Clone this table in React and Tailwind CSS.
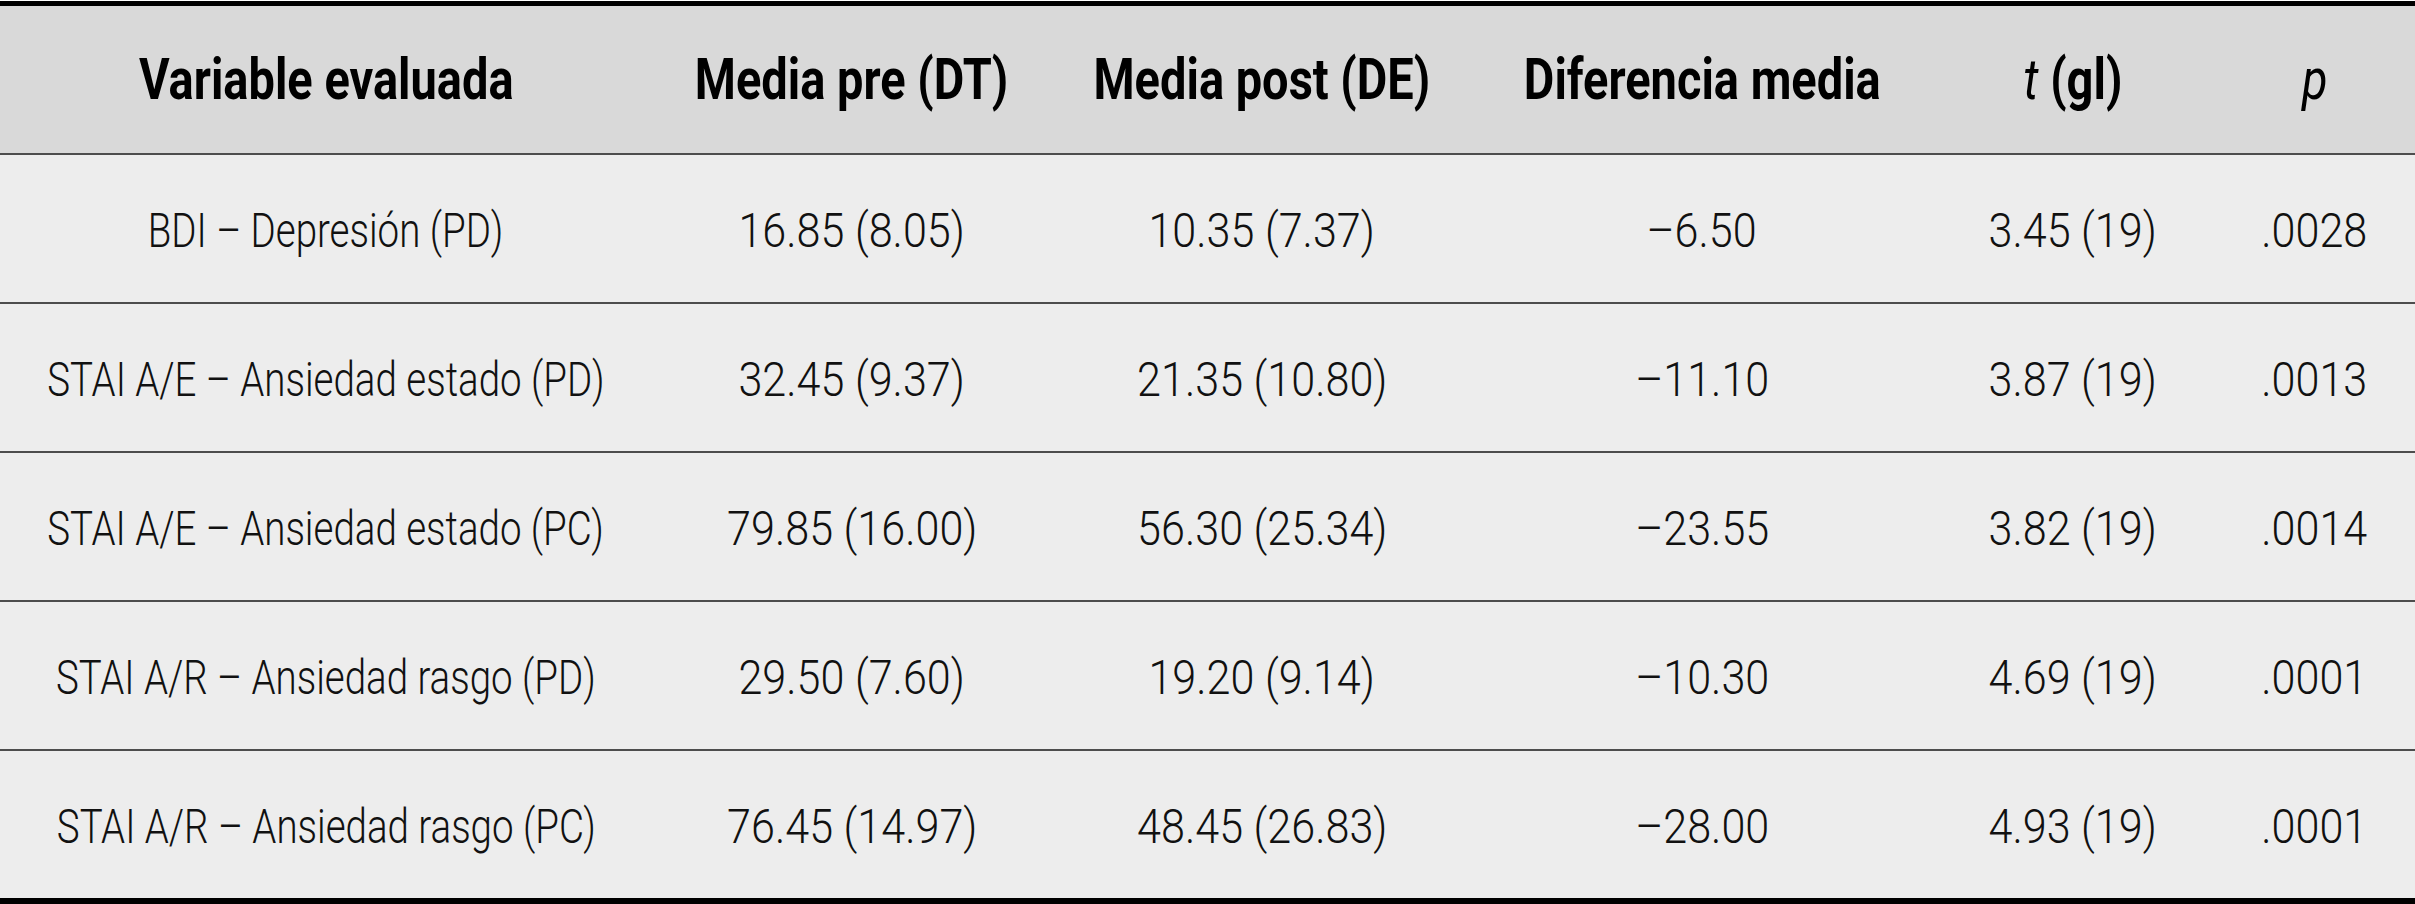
const COLS = "grid grid-cols-[652px_400px_420px_460px_282px_201px]";

const HEADERS = [
  { label: "Variable evaluada" },
  { label: "Media pre (DT)" },
  { label: "Media post (DE)" },
  { label: "Diferencia media" },
  { label: "t", rest: " (gl)" },
  { label: "p", italicOnly: true },
];

const ROWS = [
  ["BDI – Depresión (PD)", "16.85 (8.05)", "10.35 (7.37)", "–6.50", "3.45 (19)", ".0028"],
  ["STAI A/E – Ansiedad estado (PD)", "32.45 (9.37)", "21.35 (10.80)", "–11.10", "3.87 (19)", ".0013"],
  ["STAI A/E – Ansiedad estado (PC)", "79.85 (16.00)", "56.30 (25.34)", "–23.55", "3.82 (19)", ".0014"],
  ["STAI A/R – Ansiedad rasgo (PD)", "29.50 (7.60)", "19.20 (9.14)", "–10.30", "4.69 (19)", ".0001"],
  ["STAI A/R – Ansiedad rasgo (PC)", "76.45 (14.97)", "48.45 (26.83)", "–28.00", "4.93 (19)", ".0001"],
];

function HeadCell({ h }) {
  return (
    <div className="flex items-center justify-center">
      <span className="inline-block whitespace-nowrap scale-x-[0.81] text-[58px] font-bold text-black">
        {h.italicOnly ? (
          <span className="italic font-normal">{h.label}</span>
        ) : h.rest ? (
          <>
            <span className="italic font-normal">{h.label}</span>
            {h.rest}
          </>
        ) : (
          h.label
        )}
      </span>
    </div>
  );
}

function BodyCell({ text, numeric }) {
  return (
    <div className="flex items-center justify-center pt-1">
      <span
        className={`inline-block whitespace-nowrap text-[49px] font-light text-[#111] ${
          numeric ? "scale-x-[0.88]" : "scale-x-[0.785]"
        }`}
      >
        {text}
      </span>
    </div>
  );
}

export default function App() {
  return (
    <div className="w-[2415px] h-[904px] bg-white pt-px font-['Roboto','Liberation_Sans',sans-serif]">
      <div className="h-[903px] flex flex-col border-t-[5px] border-b-[6px] border-black">
        <div className={`${COLS} flex-1 bg-[#d9d9d9]`}>
          {HEADERS.map((h, i) => (
            <HeadCell key={i} h={h} />
          ))}
        </div>
        {ROWS.map((row, r) => (
          <div key={r} className={`${COLS} flex-1 bg-[#ededed] border-t-2 border-[#4d4d4d]`}>
            {row.map((cell, c) => (
              <BodyCell key={c} text={cell} numeric={c > 0} />
            ))}
          </div>
        ))}
      </div>
    </div>
  );
}
